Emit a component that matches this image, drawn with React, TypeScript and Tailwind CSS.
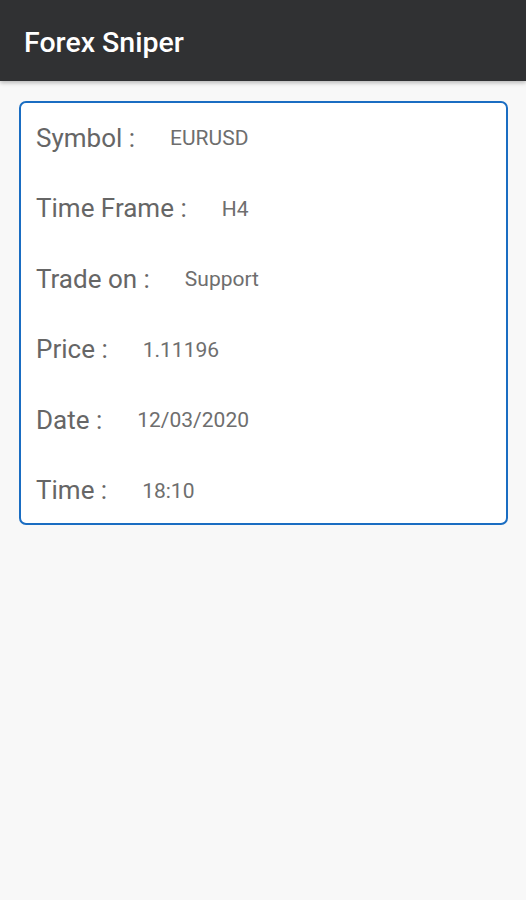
const rows: [string, string][] = [
  ["Symbol :", "EURUSD"],
  ["Time Frame :", "H4"],
  ["Trade on :", "Support"],
  ["Price :", "1.11196"],
  ["Date :", "12/03/2020"],
  ["Time :", "18:10"],
];

export default function App() {
  return (
    <div className="min-h-[900px] bg-[#f8f8f8] font-['Roboto',sans-serif]">
      <header className="flex h-[81px] items-center bg-[#303133] px-6 pt-[5px] shadow-[0_2px_4px_rgba(0,0,0,0.25)]">
        <h1 className="text-[28.5px] font-medium text-white">Forex Sniper</h1>
      </header>
      <div className="ml-[19px] mr-[18px] mt-[20px] flex flex-col gap-[40.5px] rounded-[7px] border-2 border-[#1a6dc2] bg-white pb-[17px] pl-[15px] pt-[20px]">
        {rows.map(([label, value]) => (
          <div key={label} className="flex h-[30px] items-center">
            <span className="text-[26px] text-[#666666]">{label}</span>
            <span className="ml-[35px] mt-[2px] text-[21px] text-[#6e6e6e]">{value}</span>
          </div>
        ))}
      </div>
    </div>
  );
}
